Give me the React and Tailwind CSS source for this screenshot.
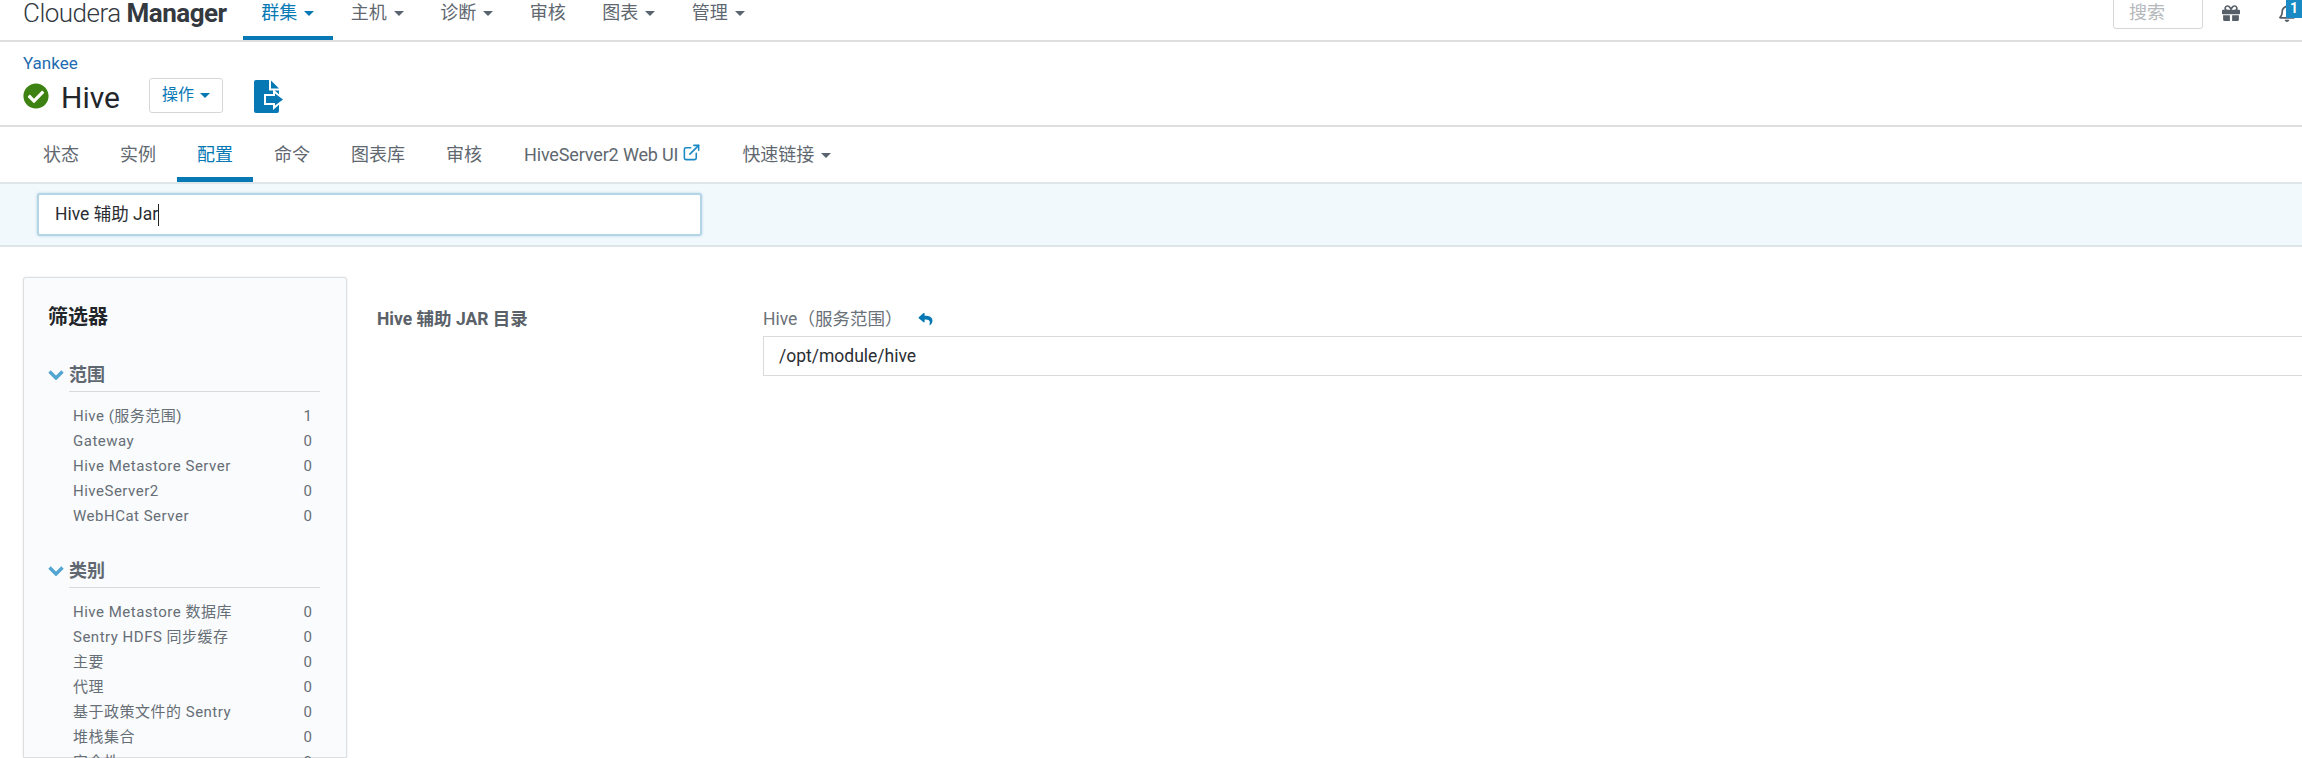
import React from "react";
import { FaCheckCircle, FaReply, FaGift, FaRegBell } from "react-icons/fa";
import { ExternalLink } from "lucide-react";

const FONT = "font-['Roboto','Noto_Sans_CJK_SC',sans-serif]";

const topNav = [
  { label: "群集", caret: true, active: true },
  { label: "主机", caret: true },
  { label: "诊断", caret: true },
  { label: "审核" },
  { label: "图表", caret: true },
  { label: "管理", caret: true },
];

const tabs = [
  { label: "状态" },
  { label: "实例" },
  { label: "配置", active: true },
  { label: "命令" },
  { label: "图表库" },
  { label: "审核" },
  { label: "HiveServer2 Web UI", external: true },
  { label: "快速链接", caret: true },
];

const filters = [
  {
    title: "范围",
    items: [
      ["Hive (服务范围)", 1],
      ["Gateway", 0],
      ["Hive Metastore Server", 0],
      ["HiveServer2", 0],
      ["WebHCat Server", 0],
    ],
  },
  {
    title: "类别",
    items: [
      ["Hive Metastore 数据库", 0],
      ["Sentry HDFS 同步缓存", 0],
      ["主要", 0],
      ["代理", 0],
      ["基于政策文件的 Sentry", 0],
      ["堆栈集合", 0],
      ["安全性", 0],
    ],
  },
];

const Caret = ({ color = "border-t-[#5a6470]", className = "" }) => (
  <span className={`inline-block w-0 h-0 border-x-[5px] border-x-transparent border-t-[5px] ${color} ${className}`}></span>
);

// file with an outlined arrow coming out of it
const ExportIcon = () => (
  <svg viewBox="0 0 31 33" className="ml-[31px] w-[31px] h-[33px] mt-[2px]">
    <path d="M2 0H15V10.5H25V31a2 2 0 0 1-2 2H2a2 2 0 0 1-2-2V2a2 2 0 0 1 2-2z" fill="#0679b5" />
    <path d="M17 0.5L25 8.5H17z" fill="#0679b5" />
    <path d="M10 14H19V9L31 19.5L19 30V25H10z" fill="#ffffff" />
    <path d="M12 16H21V13.5L29 19.5L21 25.5V23H12z" fill="#0679b5" />
  </svg>
);

const TopBar = () => (
  <div className="flex h-[42px] border-b-2 border-[#dcdee0] pl-[23px] overflow-hidden shrink-0">
    <div className="w-[220px] h-[26px] leading-[26px] text-[26px] text-[#33393f] whitespace-nowrap font-light tracking-[-0.5px]">
      Cloudera <span className="font-bold">Manager</span>
    </div>
    {topNav.map((item) => (
      <div
        key={item.label}
        className={`flex items-start gap-[7px] px-[18.25px] h-[41px] border-b-[5px] text-[18px] leading-[26px] ${item.active ? "border-[#0679b5] text-[#0679b5]" : "border-transparent text-[#5f6870]"}`}
      >
        {item.label}
        {item.caret && <Caret className="mt-[11px]" color={item.active ? "border-t-[#0679b5]" : "border-t-[#5a6470]"} />}
      </div>
    ))}
    <div className="ml-auto flex items-start">
      <div className="w-[90px] h-[40px] -mt-[11px] border border-[#d4d6d8] rounded-[3px] pl-[15px] pt-[10px] text-[18px] leading-[26px] text-[#b5b8bb]">搜索</div>
      <FaGift className="ml-[19px] mt-[4px] text-[#565e67] w-[18px] h-[18px]" />
      <div className="relative ml-[38px] w-[24px] h-[30px]">
        <FaRegBell className="mt-[4px] text-[#565e67] w-[18px] h-[18px]" />
        <span className="absolute left-[8px] -top-[1px] w-[16px] h-[19px] bg-[#1a8ac4] text-white text-[14px] leading-[19px] text-center font-bold">1</span>
      </div>
    </div>
  </div>
);

const ServiceHeader = () => (
  <div className="h-[85px] border-b-2 border-[#dcdee0] pl-[23px] pt-[11px] shrink-0">
    <div className="text-[17px] leading-[20px] text-[#1f6cb0]">Yankee</div>
    <div className="flex items-center mt-[3px]">
      <FaCheckCircle className="w-[26px] h-[26px] text-[#3f8214]" />
      <span className="ml-[12px] mt-[4px] text-[30px] leading-[35px] text-[#22262a]">Hive</span>
      <button className="ml-[29px] w-[74px] h-[35px] -mt-px border border-[#d4d6d8] rounded-[3px] flex items-center justify-center gap-[6px] text-[16px] text-[#0679b5]">
        操作
        <Caret color="border-t-[#0679b5]" />
      </button>
      <ExportIcon />
    </div>
  </div>
);

const Tabs = () => (
  <div className="flex h-[55px] pl-[23px] shrink-0">
    {tabs.map((tab) => (
      <div
        key={tab.label}
        className={`flex items-start px-[20px] pt-[15px] mr-px border-b-[5px] text-[18px] leading-[26px] whitespace-nowrap ${tab.active ? "border-[#0679b5] text-[#0679b5]" : "border-transparent text-[#5f6870]"} ${tab.external ? "pl-[21px] tracking-[-0.15px]" : ""}`}
      >
        {tab.label}
        {tab.external && <ExternalLink className="ml-[4px] mt-[1px] w-[19px] h-[19px] text-[#1a8ac4]" strokeWidth={2} />}
        {tab.caret && <Caret className="ml-[7px] mt-[11px]" />}
      </div>
    ))}
  </div>
);

const SearchBand = () => (
  <div className="h-[65px] bg-[#f2f9fc] border-y-2 border-[#dfe6ea] pl-[37px] pt-[9px] shrink-0">
    <div className="w-[665px] h-[43px] bg-white border-2 border-[#b4d5e6] rounded-[3px] shadow-[0_0_3px_#b4d5e6] pl-[16px] flex items-center text-[17.5px] text-[#2a2e33]">
      Hive 辅助 Jar
      <span className="w-px h-[22px] bg-[#222]"></span>
    </div>
  </div>
);

const FilterPanel = () => (
  <div className="w-[324px] shrink-0 bg-[#fafbfd] border border-[#dcdee0] rounded-t-[3px] shadow-[0_0_2px_#e0e2e4] pl-[24px] pt-[25px]">
    <div className="text-[20px] leading-[28px] font-bold text-[#22262a]">筛选器</div>
    {filters.map((group, idx) => (
      <div key={group.title} className={idx === 0 ? "mt-[30px]" : "mt-[28px]"}>
        <div className="flex items-start">
          <svg viewBox="0 0 16 10" className="w-[16px] h-[10px] mt-[9px]">
            <path d="M1.5 1.5L8 8L14.5 1.5" fill="none" stroke="#52a5d0" strokeWidth="3.4" />
          </svg>
          <div className="ml-[5px] w-[251px] h-[31px] border-b border-[#d8dadc] text-[18px] leading-[28px] font-bold text-[#5f6870]">{group.title}</div>
        </div>
        <div className="mt-[12px] pl-[25px] w-[265px]">
          {group.items.map(([name, count]) => (
            <div key={name} className="flex justify-between h-[25px] text-[15px] leading-[25px] tracking-[0.5px] text-[#666e76] whitespace-nowrap">
              <span>{name}</span>
              <span className="w-[10px] text-center">{count}</span>
            </div>
          ))}
        </div>
      </div>
    ))}
  </div>
);

const ConfigRow = () => (
  <div className="flex-1 flex pl-[30px] pt-[31px]">
    <div className="w-[386px] shrink-0 text-[17.5px] leading-[22px] font-bold text-[#5a6168]">Hive 辅助 JAR 目录</div>
    <div className="flex-1">
      <div className="flex items-center h-[22px] text-[17.5px] text-[#6a7178]">
        Hive（服务范围）
        <FaReply className="ml-[15px] w-[17px] h-[14px] text-[#0679b5]" />
      </div>
      <div className="mt-[6px] h-[40px] border border-[#d8dadc] border-r-0 pl-[15px] flex items-center text-[17.5px] text-[#2a2e33]">/opt/module/hive</div>
    </div>
  </div>
);

const App = () => {
  return (
    <div className={`flex flex-col h-[758px] bg-white overflow-hidden ${FONT}`}>
      <TopBar />
      <ServiceHeader />
      <Tabs />
      <SearchBand />
      <div className="flex flex-1 min-h-0 pl-[23px] pt-[30px]">
        <FilterPanel />
        <ConfigRow />
      </div>
    </div>
  );
};

export default App;
